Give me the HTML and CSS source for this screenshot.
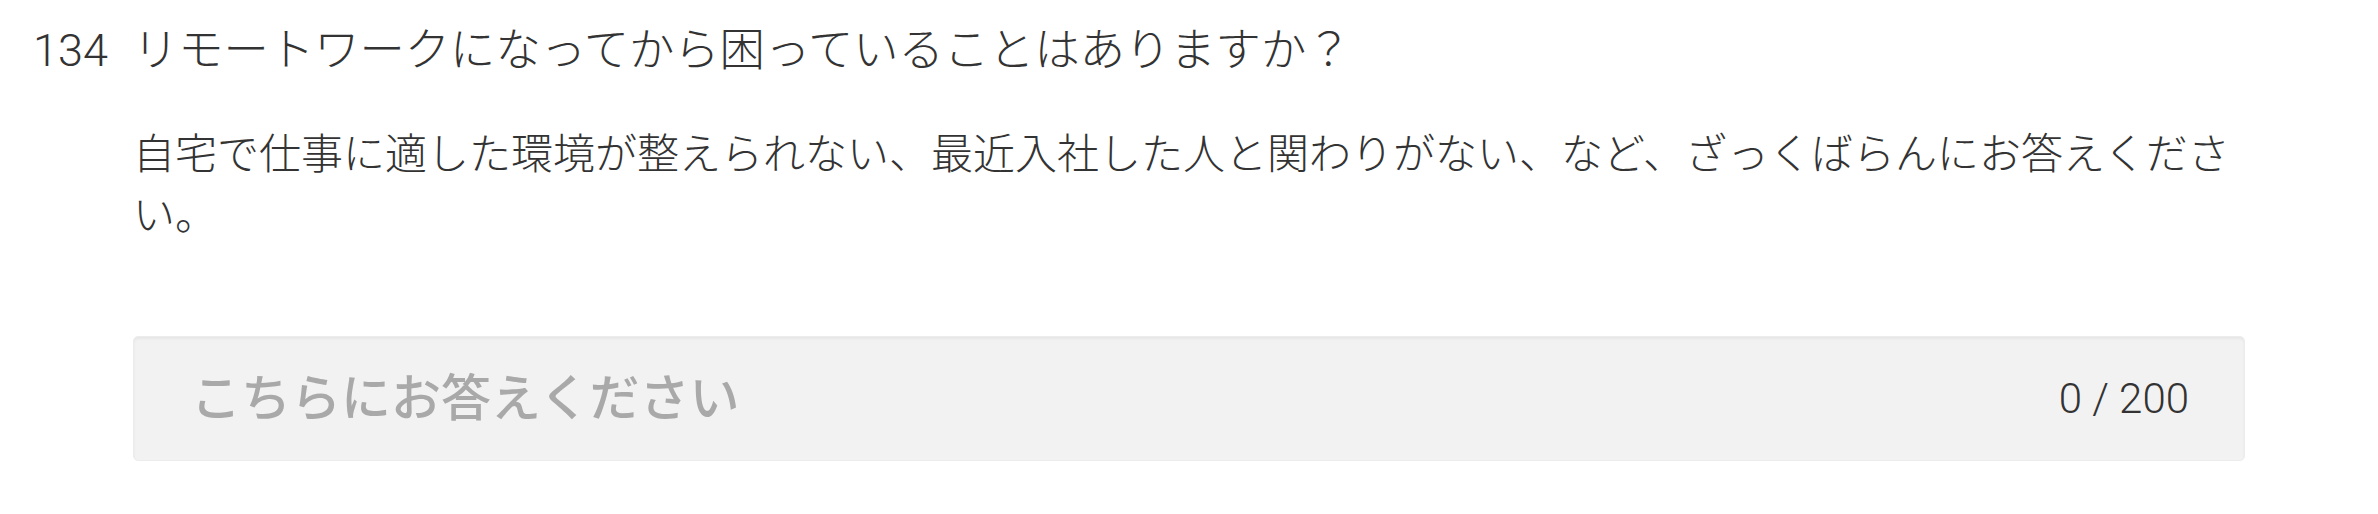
FILE: index.html
```html
<!DOCTYPE html>
<html lang="ja">
<head>
<meta charset="utf-8">
<title>Question 134</title>
<link rel="stylesheet" href="styles.css">
</head>
<body>
<section class="question">
  <div class="q-num">134</div>
  <h2 class="q-title">リモートワークになってから困っていることはありますか？</h2>
  <p class="q-desc">自宅で仕事に適した環境が整えられない、最近入社した人と関わりがない、など、ざっくばらんにお答えください。</p>
  <div class="answer">
    <textarea class="answer-input" rows="1" placeholder="こちらにお答えください"></textarea>
    <span class="answer-count">0 / 200</span>
  </div>
</section>
</body>
</html>
```

FILE: styles.css
```css
html, body {
  margin: 0;
  padding: 0;
  background: #ffffff;
}

body {
  font-family: Roboto, "Noto Sans CJK JP", sans-serif;
  color: #333333;
}

.question {
  display: grid;
  grid-template-columns: 100px 1fr;
  padding: 18px 133px 0 33px;
}

.q-num {
  grid-column: 1;
  font-size: 45px;
  line-height: 66px;
  font-weight: 300;
}

.q-title {
  grid-column: 2;
  margin: 0;
  font-size: 45.3px;
  line-height: 66px;
  font-weight: 300;
}

.q-desc {
  grid-column: 2;
  margin: 40px 0 0;
  font-size: 42px;
  line-height: 61px;
  font-weight: 300;
}

.answer {
  grid-column: 2;
  margin-top: 90px;
  height: 125px;
  box-sizing: border-box;
  display: flex;
  align-items: center;
  justify-content: space-between;
  padding: 0 55px 0 57px;
  background: #f2f2f2;
  border: 1px solid #ececec;
  border-radius: 5px;
  box-shadow: inset 0 2px 3px rgba(0, 0, 0, 0.05);
}

.answer-input {
  flex: 1;
  height: 64px;
  margin: 0;
  padding: 0;
  border: 0;
  outline: none;
  resize: none;
  overflow: hidden;
  background: transparent;
  font-family: "Noto Sans CJK JP", sans-serif;
  font-size: 50px;
  font-weight: 500;
  line-height: 54px;
  color: #333333;
}

.answer-input::placeholder {
  color: #a9a9a9;
  opacity: 1;
}

.answer-count {
  font-family: Roboto, sans-serif;
  font-size: 42px;
  font-weight: 300;
  line-height: 60px;
  color: #333333;
  white-space: nowrap;
}
```
